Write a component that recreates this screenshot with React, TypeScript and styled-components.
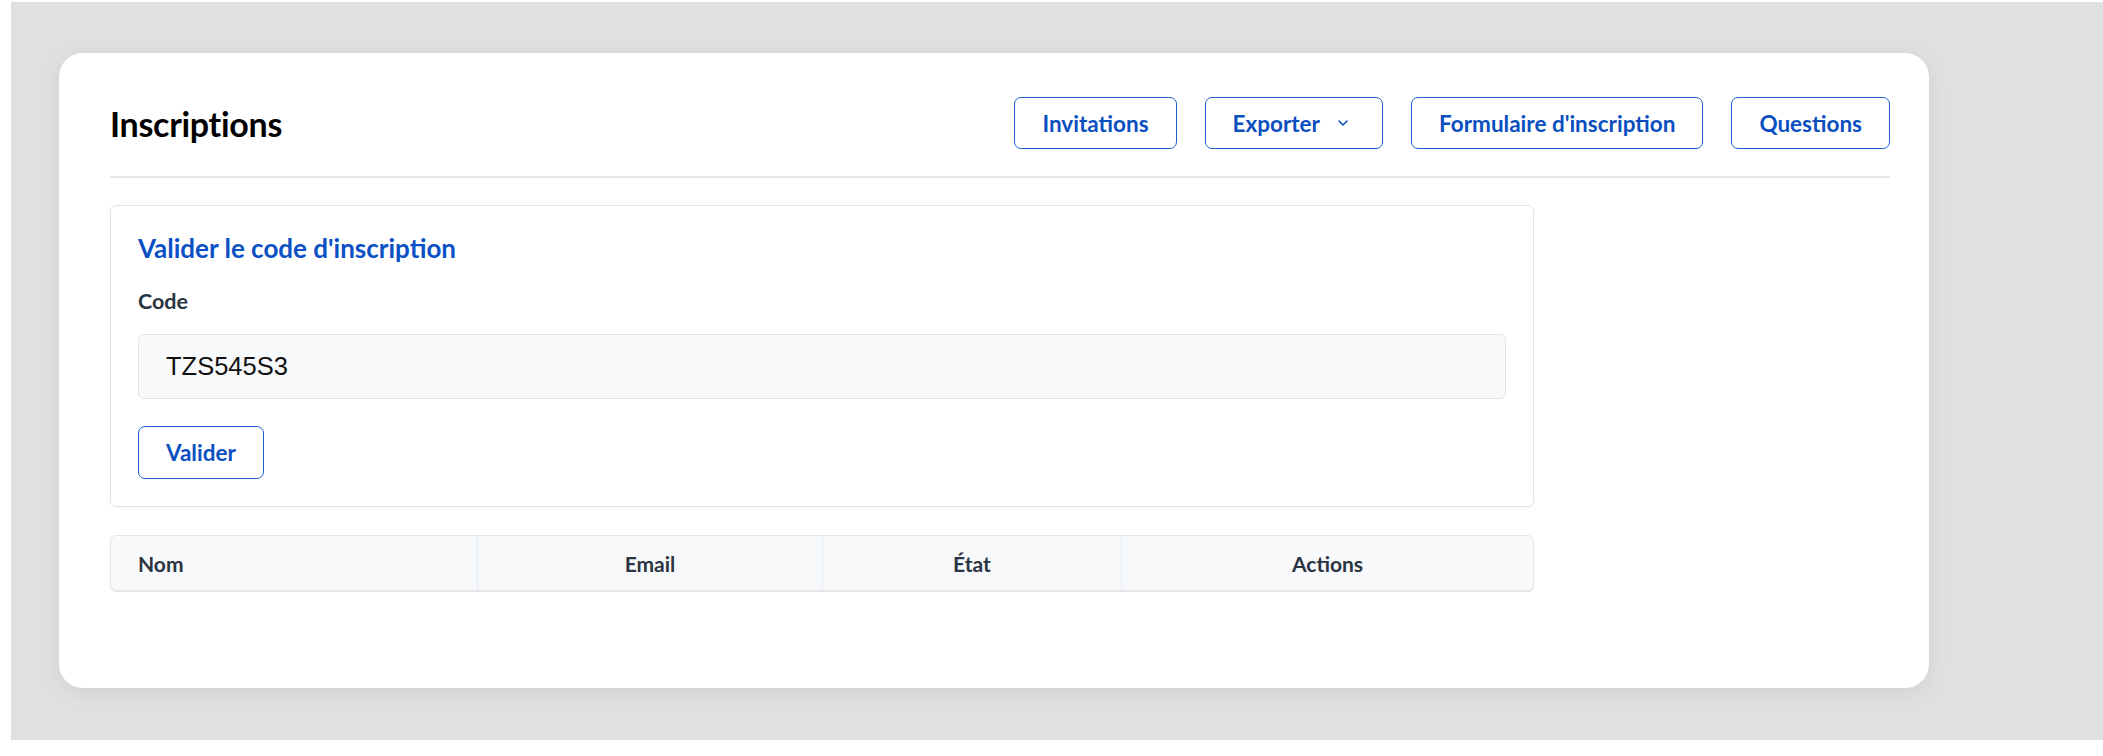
import styled, { createGlobalStyle } from "styled-components"

const GlobalStyle = createGlobalStyle`
  html, body {
    margin: 0;
    padding: 0;
    background: #ffffff;
  }
  body {
    font-family: Lato, "Noto Sans", sans-serif;
  }
  * {
    box-sizing: border-box;
  }
`

const columns = [
  { label: 'Nom', width: '366px', align: 'left' },
  { label: 'Email', width: '345px', align: 'center' },
  { label: 'État', width: '299px', align: 'center' },
  { label: 'Actions', width: 'auto', align: 'center' },
]

function ChevronDown () {
  return <svg width="12" height="8" viewBox="0 0 12 8" fill="none">
    <path d="M2 2l4 4 4-4" stroke="#0a4fc0" strokeWidth="1.6" strokeLinecap="round" strokeLinejoin="round" />
  </svg>
}

export default function App () {
  return <>
    <GlobalStyle />
    <Backdrop>
      <Card>
        <Heading>
          <Title>Inscriptions</Title>
          <Actions>
            <OutlineButton>Invitations</OutlineButton>
            <OutlineButton $withIcon>
              Exporter
              <ChevronDown />
            </OutlineButton>
            <OutlineButton>Formulaire d'inscription</OutlineButton>
            <OutlineButton>Questions</OutlineButton>
          </Actions>
        </Heading>
        <Divider />
        <Panel>
          <PanelTitle>Valider le code d'inscription</PanelTitle>
          <FieldLabel htmlFor="code">Code</FieldLabel>
          <CodeInput id="code" defaultValue="TZS545S3" />
          <OutlineButton $small>Valider</OutlineButton>
        </Panel>
        <Table>
          <thead>
            <tr>
              {columns.map(col => (
                <HeaderCell key={col.label} $align={col.align} style={{ width: col.width }}>
                  {col.label}
                </HeaderCell>
              ))}
            </tr>
          </thead>
        </Table>
      </Card>
    </Backdrop>
  </>
}

const Backdrop = styled.div`
  margin: 2px 0 0 11px;
  height: 738px;
  background-color: #e0e0e0;
  padding: 51px 0 0 48px;
`

const Card = styled.div`
  width: 1870px;
  height: 635px;
  background-color: #ffffff;
  border-radius: 24px;
  padding: 44px 39px 0 51px;
  box-shadow: 0 4px 20px rgba(0, 0, 0, .07);
  display: flex;
  flex-direction: column;
  align-items: flex-start;
`

const Heading = styled.div`
  width: 100%;
  height: 52px;
  display: flex;
  align-items: center;
  justify-content: space-between;
`

const Title = styled.h1`
  margin: 0;
  font-size: 34px;
  font-weight: 700;
  color: #000000;
  letter-spacing: -0.3px;
`

const Actions = styled.div`
  display: flex;
  gap: 28px;
`

const OutlineButton = styled.button<{ $withIcon?: boolean, $small?: boolean }>`
  height: ${p => p.$small ? '53px' : '52px'};
  padding: 0 ${p => p.$withIcon ? '33px' : '27px'} 0 27px;
  display: inline-flex;
  align-items: center;
  gap: 17px;
  background: #ffffff;
  border: 1.8px solid #1f60cc;
  border-radius: 7px;
  color: #0a4fc0;
  font-family: Lato, "Noto Sans", sans-serif;
  font-size: 22.5px;
  font-weight: 700;
  cursor: pointer;
`

const Divider = styled.div`
  width: 100%;
  height: 2px;
  margin-top: 27px;
  background-color: #e6e6e6;
`

const Panel = styled.div`
  width: 1424px;
  margin-top: 27px;
  padding: 26px 27px 27px 27px;
  border: 1.5px solid #e4e4e6;
  border-radius: 6px;
  display: flex;
  flex-direction: column;
  align-items: flex-start;
  box-shadow: 0 1px 2px rgba(0, 0, 0, .04);
`

const PanelTitle = styled.h2`
  margin: 0;
  line-height: 32px;
  font-size: 26px;
  font-weight: 700;
  color: #0b50c4;
`

const FieldLabel = styled.label`
  margin-top: 23px;
  line-height: 28px;
  font-size: 21.5px;
  font-weight: 700;
  color: #2b3442;
`

const CodeInput = styled.input`
  width: 100%;
  height: 65px;
  margin: 19px 0 27px;
  padding: 0 27px;
  background-color: #f8f9fb;
  border: 1.5px solid #e2e4e8;
  border-radius: 6px;
  font-family: "Liberation Sans", Arial, sans-serif;
  font-size: 25.5px;
  color: #111111;
  outline: none;
`

const Table = styled.table`
  width: 1424px;
  margin-top: 28px;
  border-collapse: separate;
  border-spacing: 0;
  background-color: #f8f9fb;
  border: 1.5px solid #e3e5e9;
  border-bottom-width: 2px;
  border-radius: 6px;
  overflow: hidden;
`

const HeaderCell = styled.th<{ $align: string }>`
  height: 54px;
  padding: 0 27px;
  text-align: ${p => p.$align};
  font-size: 21px;
  font-weight: 700;
  color: #2b3442;
  border-left: 1.5px solid #e6edf7;

  &:first-child {
    border-left: none;
  }
`
